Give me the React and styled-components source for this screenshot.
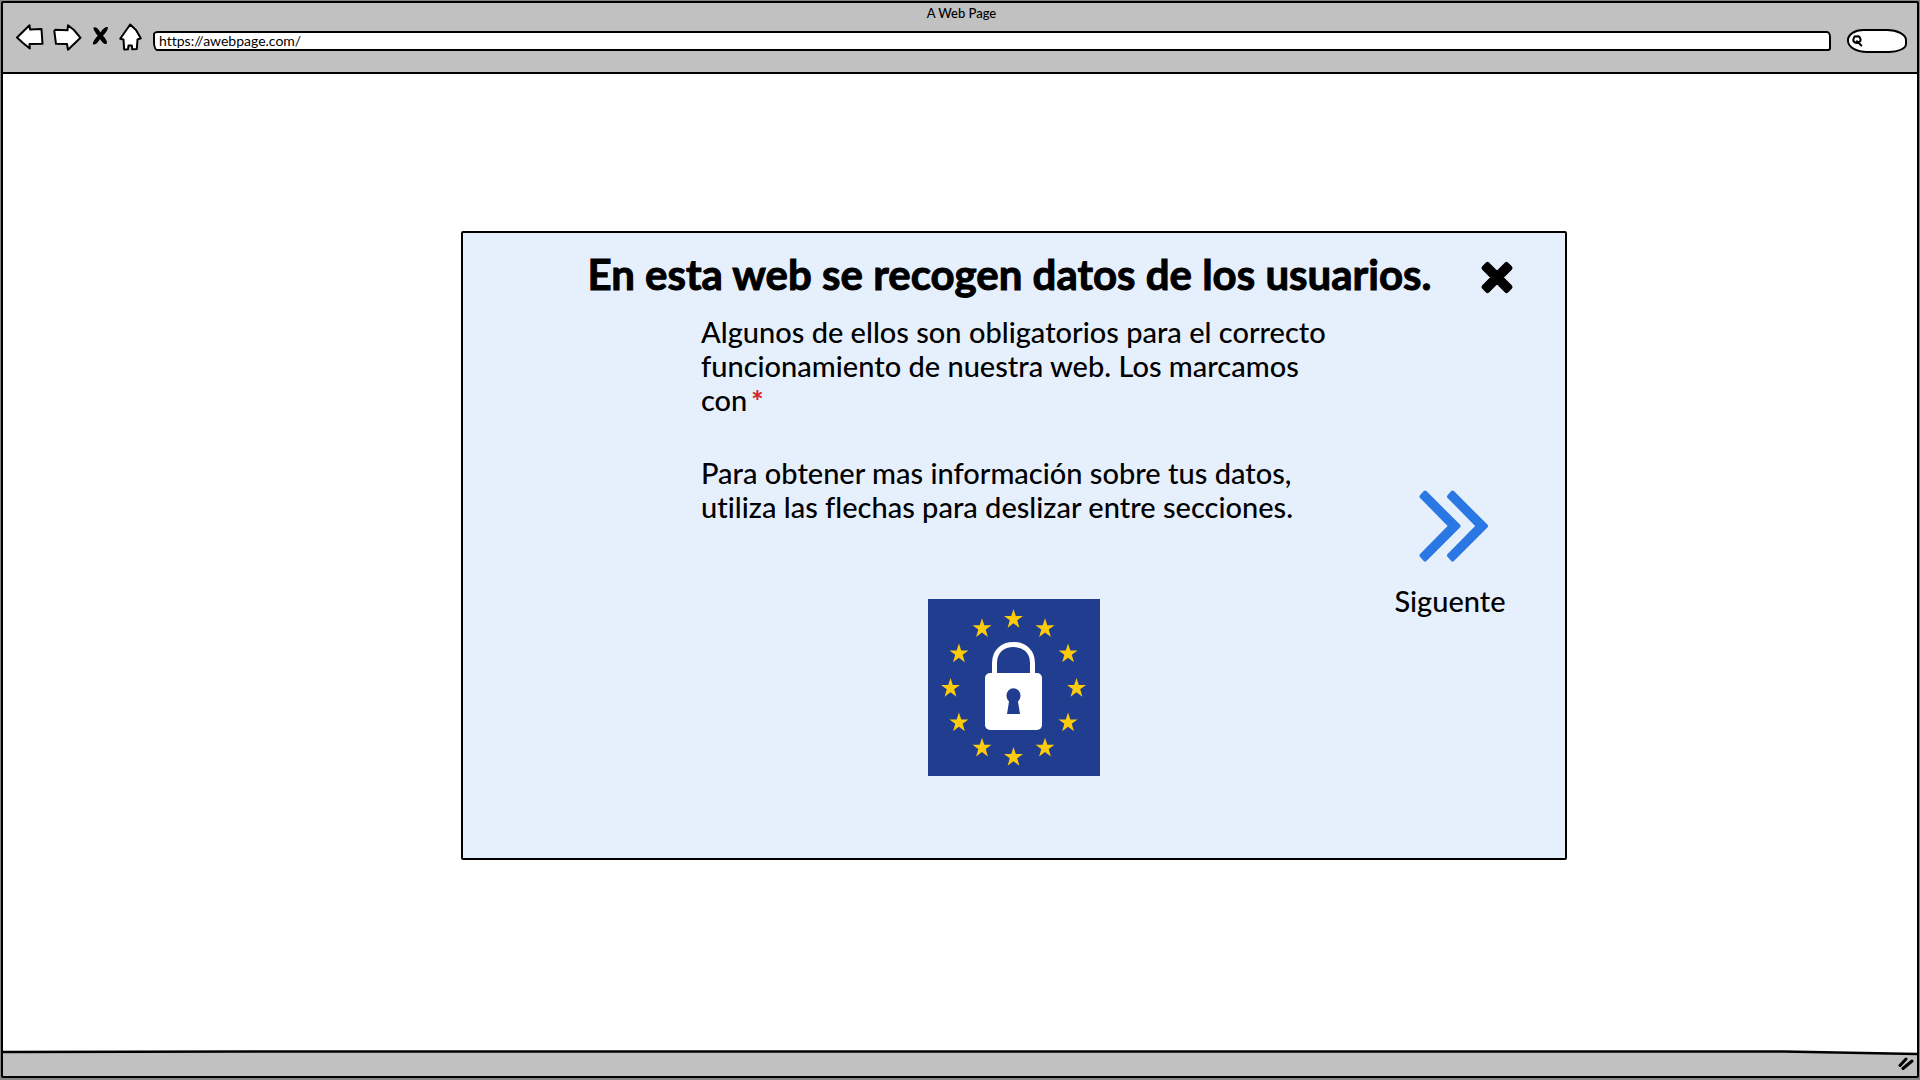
import React from "react";
import styled, { createGlobalStyle } from "styled-components";

const GlobalStyle = createGlobalStyle`
  * { box-sizing: border-box; }
  body {
    margin: 0;
    background: #fff;
    color: #000;
    font-family: Lato, "Open Sans", sans-serif;
    font-variant-ligatures: none;
  }
  button, input { font: inherit; color: inherit; }
`;

const Backdrop = styled.div`
  display: flex;
  flex-direction: column;
  min-height: 100vh;
  padding: 1px 1px 2px;
  background: #848884;
`;

const Browser = styled.div`
  flex: 1;
  display: flex;
  flex-direction: column;
  border: 2px solid #000;
  border-radius: 2px;
  background: #fff;
`;

const Chrome = styled.header`
  background: #c1c1c1;
  border-bottom: 2px solid #000;
  padding: 2px 10px 19px 13px;
`;

const PageTitle = styled.div`
  font-size: 13px;
  line-height: 16px;
  text-align: center;
  font-weight: 500;
`;

const Toolbar = styled.div`
  display: flex;
  align-items: center;
  gap: 11px;
  height: 32px;
`;

const Nav = styled.nav`
  display: flex;
  align-items: center;
  gap: 10px;
`;

const IconButton = styled.button`
  display: flex;
  padding: 0;
  border: 0;
  background: none;
  cursor: pointer;
  svg { display: block; overflow: visible; }
`;

const Address = styled.input`
  flex: 1;
  min-width: 0;
  height: 20px;
  margin-top: 8px;
  padding: 0 4px 2px;
  border: 2px solid #000;
  border-radius: 5px 4px 3px 4px / 3px 6px 3px 9px;
  background: #fff;
  font-size: 14px;
  line-height: 16px;
  outline: none;
`;

const SearchBox = styled.label`
  display: flex;
  align-items: center;
  width: 60px;
  height: 24px;
  margin: 8px 0 0 5px;
  padding-left: 3px;
  border: 2px solid #000;
  border-radius: 16px 20px 18px 20px / 11px 11px 9px 12px;
  background: #fff;
  svg { flex: none; }
`;

const SearchInput = styled.input`
  width: 100%;
  min-width: 0;
  padding: 0;
  border: 0;
  background: none;
  outline: none;
  font-size: 13px;
  line-height: 16px;
`;

const Stage = styled.main`
  flex: 1;
  display: flex;
  justify-content: center;
  align-items: flex-start;
  padding: 157px 0 157px 108px;
`;

const Dialog = styled.section`
  width: 100%;
  max-width: 1106px;
  padding: 17px 0 82px;
  border: 2px solid #000;
  border-radius: 2px;
  background: #e6f0fd;
`;

const DialogHeader = styled.header`
  display: grid;
  grid-template-columns: 1fr auto 1fr;
  align-items: center;
`;

const Heading = styled.h1`
  grid-column: 2;
  margin: 0;
  padding-right: 9px;
  font-size: 42px;
  line-height: 48px;
  font-weight: 700;
  -webkit-text-stroke: 1px #000;
`;

const CloseButton = styled(IconButton)`
  justify-self: end;
  margin: 6px 51px 0 0;
`;

const DialogBody = styled.div`
  display: grid;
  grid-template-columns: 1fr 626px 1fr;
  padding-top: 17px;
`;

const Copy = styled.div`
  grid-column: 2;
`;

const Paragraph = styled.p`
  margin: 0 0 39px;
  font-size: 29px;
  font-weight: 500;
  line-height: 34px;
`;

const Required = styled.span`
  margin-left: 4px;
  color: #d8262c;
  font-weight: 900;
`;

const Emblem = styled.svg`
  display: block;
  margin: 75px auto 0;
`;

const NextButton = styled.button`
  align-self: start;
  justify-self: center;
  display: flex;
  flex-direction: column;
  align-items: center;
  gap: 22px;
  margin-top: 175px;
  padding: 0 0 0 8px;
  border: 0;
  background: none;
  font-size: 29px;
  font-weight: 500;
  line-height: 34px;
  cursor: pointer;
  svg { display: block; margin-left: 8px; }
`;

const StatusBar = styled.footer`
  position: relative;
  display: flex;
  justify-content: flex-end;
  align-items: center;
  height: 24px;
  padding-right: 3px;
  background: #c1c1c1;
`;

const StatusEdge = styled.svg`
  position: absolute;
  left: 0;
  top: -2px;
  width: 100%;
  height: 6px;
`;

const ink = { stroke: "#000", strokeWidth: 2, strokeLinejoin: "round", strokeLinecap: "round" };

const BackIcon = () => (
  <svg width="28" height="26" viewBox="0 0 28 26" fill="#fff" {...ink} aria-hidden="true">
    <path d="M1 13.5 13.5 1.2 14 5.5 25.500 5 26.500 19.800 13.500 20 13.800 24.600 7 19Z" />
  </svg>
);

const ForwardIcon = () => (
  <svg width="28" height="27" viewBox="1 0 28 27" fill="#fff" {...ink} aria-hidden="true">
    <path d="M1.300 7 2.500 5.800 14.500 6.300 15 1.200 21 6 27.500 13.800 15 25.800 14 20 3 19.800Z" />
  </svg>
);

const StopIcon = () => (
  <svg width="17" height="23" viewBox="0 0 17 23" fill="#000" aria-hidden="true">
    <path d="M1.500 1.500Q5 .5 8.500 6.500 12 .5 15.800 1 16.500 4 11 9.700 15.500 14.500 15 17.500 12 19.500 8 13 5 18.800 1 18.500 0 16 5.700 9.700 1 4 1.500 1.500Z" />
  </svg>
);

const HomeIcon = () => (
  <svg width="23" height="28" viewBox="0 0 23 28" fill="#fff" {...ink} aria-hidden="true">
    <path d="M11.200 1.500 1.200 15.800 4.500 16.500 5.200 26.500 9 26.300 9.500 22.500 12.800 22.500 13.300 26.300 17.800 26 18.500 16.500 21.800 15.300 17 7Z" />
  </svg>
);

const SearchIcon = () => (
  <svg width="11" height="12" viewBox="0 0 11 12" fill="none" {...ink} aria-hidden="true">
    <path d="M2.500 1.500 6.500 1.200Q9.300 3 8.300 6.300L4.500 8Q1 7.300 1.300 4.500ZM5 6.300 9.300 10.500" />
  </svg>
);

const CloseIcon = () => (
  <svg width="33" height="33" viewBox="0 0 33 33" aria-hidden="true">
    <path
      d="M6.500 3.500 16 13 25.500 3.500 29 7 19.500 16.500 29 26 25.500 29.500 16 20 6.500 29.500 3 26 12.500 16.500 3 7Z"
      stroke="#000" strokeWidth="5" strokeLinejoin="round"
    />
  </svg>
);

const ChevronsIcon = () => (
  <svg width="70" height="72" viewBox="0 0 70 72" fill="#2b78e4" stroke="#2b78e4" strokeWidth="4" strokeLinejoin="round" aria-hidden="true">
    <path d="M6 2.500 39.500 36 6 69.500 2.500 65.500 31.500 36 2.500 6.500Z" />
    <path d="M33.500 2.500 67 36 33.500 69.500 30 65.500 59 36 30 6.500Z" />
  </svg>
);

const ResizeIcon = () => (
  <svg width="16" height="14" viewBox="0 0 16 14" fill="none" stroke="#000" strokeWidth="3" strokeLinecap="round" aria-hidden="true">
    <path d="M2 8.500 8 2M5 11.500 14 4" />
  </svg>
);

const STAR = "0,-10 2.300,-3.100 9.500,-3.100 3.700,1.200 5.900,8.800 0,4.200 -5.900,8.800 -3.700,1.200 -9.500,-3.100 -2.300,-3.100";

const PrivacyEmblem = () => (
  <Emblem width="172" height="177" viewBox="0 0 172 177" role="img" aria-label="Protección de datos en la Unión Europea">
    <rect width="172" height="177" fill="#213d8f" />
    {Array.from({ length: 12 }, (_, i) => {
      const angle = (i * Math.PI) / 6;
      const x = 85.500 + 63 * Math.sin(angle);
      const y = 89 - 69 * Math.cos(angle);
      return <polygon key={i} points={STAR} fill="#fdcb09" transform={`translate(${x} ${y})`} />;
    })}
    <path d="M66.500 76V64C66.500 52 75 45.500 85.500 45.500S104.500 52 104.500 64V76" fill="none" stroke="#fff" strokeWidth="5" />
    <rect x="57" y="74" width="57" height="57" rx="5" fill="#fff" />
    <path d="M81 102.500A7 7.500 0 1 1 90 102.500L92 115H79Z" fill="#213d8f" />
  </Emblem>
);

export default function App() {
  return (
    <>
      <GlobalStyle />
      <Backdrop>
        <Browser>
          <Chrome>
            <PageTitle>A Web Page</PageTitle>
            <Toolbar>
              <Nav aria-label="Navegador">
                <IconButton aria-label="Atrás"><BackIcon /></IconButton>
                <IconButton aria-label="Adelante"><ForwardIcon /></IconButton>
                <IconButton aria-label="Detener"><StopIcon /></IconButton>
                <IconButton aria-label="Inicio"><HomeIcon /></IconButton>
              </Nav>
              <Address type="text" aria-label="Dirección" defaultValue="https://awebpage.com/" />
              <SearchBox>
                <SearchIcon />
                <SearchInput type="text" aria-label="Buscar" />
              </SearchBox>
            </Toolbar>
          </Chrome>
          <Stage>
            <Dialog role="dialog" aria-labelledby="dialog-title">
              <DialogHeader>
                <Heading id="dialog-title">En esta web se recogen datos de los usuarios.</Heading>
                <CloseButton aria-label="Cerrar"><CloseIcon /></CloseButton>
              </DialogHeader>
              <DialogBody>
                <Copy>
                  <Paragraph>
                    Algunos de ellos son obligatorios para el correcto funcionamiento de nuestra web. Los marcamos con<Required>*</Required>
                  </Paragraph>
                  <Paragraph>
                    Para obtener mas información sobre tus datos, utiliza las flechas para deslizar entre secciones.
                  </Paragraph>
                  <PrivacyEmblem />
                </Copy>
                <NextButton>
                  <ChevronsIcon />
                  Siguente
                </NextButton>
              </DialogBody>
            </Dialog>
          </Stage>
          <StatusBar>
            <StatusEdge viewBox="0 0 1914 6" preserveAspectRatio="none" aria-hidden="true">
              <path d="M0 0H1914V3.500L1780 1H0Z" fill="#fff" />
              <path d="M0 2 300 1.500 1780 1.500 1914 4" fill="none" stroke="#000" strokeWidth="2.500" />
            </StatusEdge>
            <ResizeIcon />
          </StatusBar>
        </Browser>
      </Backdrop>
    </>
  );
}
